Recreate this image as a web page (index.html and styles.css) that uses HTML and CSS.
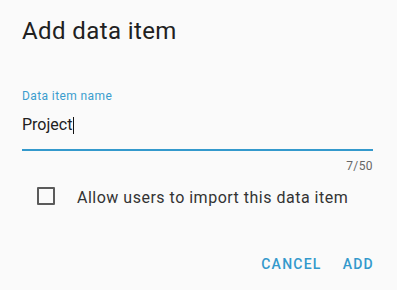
FILE: index.html
```html
<!DOCTYPE html>
<html>
<head>
<meta charset="utf-8">
<link rel="stylesheet" href="styles.css">
</head>
<body>
<div class="dialog">
  <h1 class="title">Add data item</h1>
  <div class="field">
    <div class="label">Data item name</div>
    <div class="input"><span class="value">Project</span><span class="caret"></span></div>
    <div class="helper">7/50</div>
  </div>
  <label class="check-row">
    <span class="box"></span>
    <span class="check-text">Allow users to import this data item</span>
  </label>
  <div class="actions">
    <button class="btn">Cancel</button>
    <button class="btn">Add</button>
  </div>
</div>
</body>
</html>
```
FILE: styles.css
```css
html, body {
  margin: 0;
  padding: 0;
  background: #fafafa;
  width: 397px;
  height: 290px;
  overflow: hidden;
}
body {
  font-family: Roboto, "Liberation Sans", sans-serif;
  color: rgba(0, 0, 0, 0.87);
}
.dialog {
  padding: 15px 24px 0 22px;
}
.title {
  margin: 0;
  font-size: 24px;
  line-height: 32px;
  font-weight: 400;
  letter-spacing: 0.4px;
  color: #212121;
}
.field {
  margin-top: 41px;
}
.label {
  font-size: 12px;
  line-height: 16px;
  letter-spacing: 0.4px;
  color: #3a9dce;
}
.input {
  margin-top: 9px;
  display: flex;
  align-items: center;
  font-size: 16px;
  line-height: 24px;
  color: #212121;
  padding-bottom: 12px;
  border-bottom: 2px solid #3399cc;
}
.caret {
  display: inline-block;
  width: 1px;
  height: 17px;
  background: #111;
  margin-left: 1px;
  margin-top: 1px;
}
.helper {
  margin-top: 7px;
  text-align: right;
  font-size: 12px;
  line-height: 16px;
  letter-spacing: 0.4px;
  color: #666;
}
.check-row {
  margin-top: 12px;
  display: flex;
  align-items: flex-start;
  padding-left: 15px;
}
.box {
  width: 14px;
  height: 14px;
  border: 2px solid #5a5a5a;
  border-radius: 1px;
  margin-top: 1px;
  flex: none;
}
.check-text {
  margin-left: 22px;
  font-size: 16px;
  line-height: 24px;
  letter-spacing: 0.5px;
  color: #333;
}
.actions {
  margin-top: 36px;
  margin-right: -9px;
  display: flex;
  justify-content: flex-end;
  gap: 5px;
}
.btn {
  border: 0;
  background: transparent;
  padding: 0 8px;
  height: 36px;
  font-family: Roboto, "Liberation Sans", sans-serif;
  font-size: 14px;
  font-weight: 500;
  letter-spacing: 1.25px;
  text-transform: uppercase;
  color: #3399cc;
}
```
